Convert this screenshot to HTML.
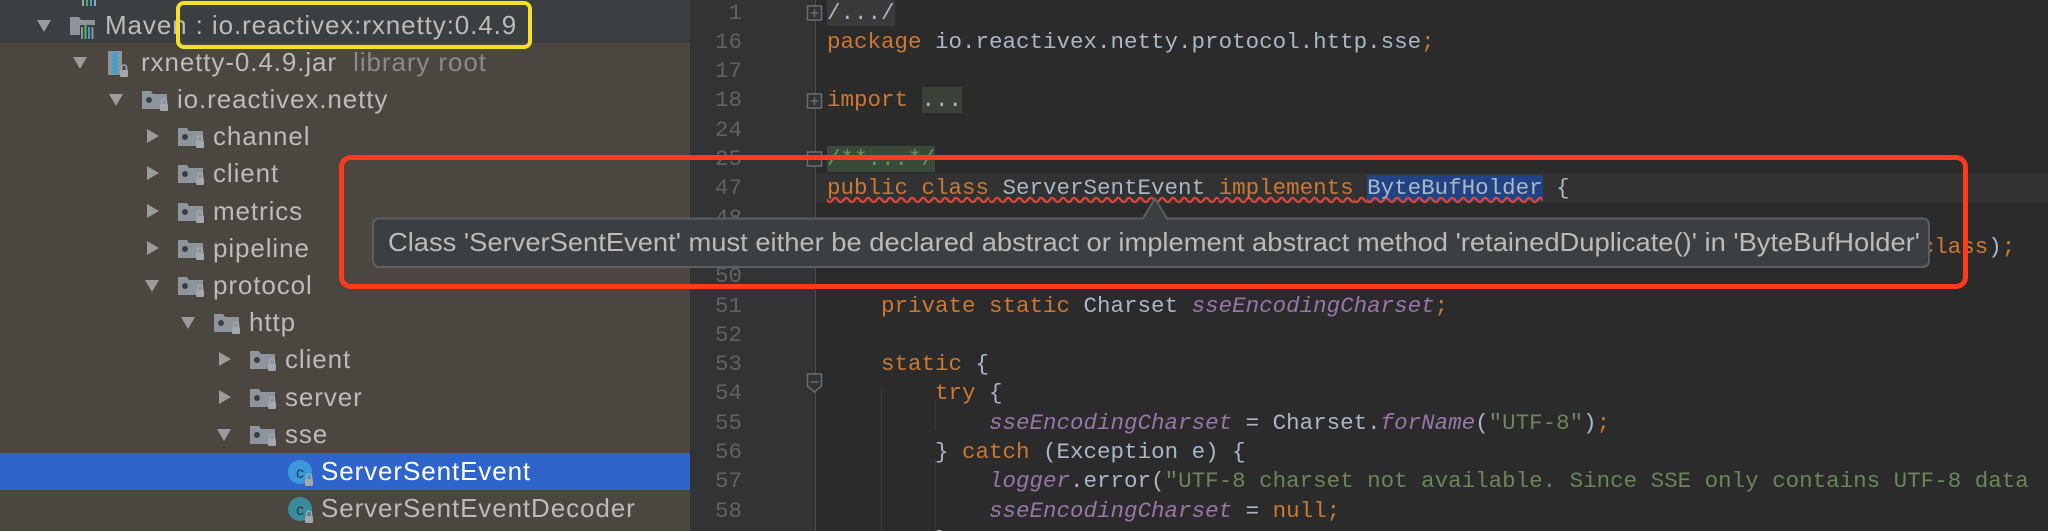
<!DOCTYPE html>
<html style="width:2048px;height:531px;overflow:hidden"><head><meta charset="utf-8"><style>
*{margin:0;padding:0;box-sizing:border-box}
body{width:2048px;height:531px;overflow:hidden;background:#2b2b2b;position:relative;font-family:"Liberation Sans",sans-serif}
.abs{position:absolute}
.side{left:0;top:0;width:690px;height:531px;background:#4b4740}
.row{position:absolute;left:0;width:690px;height:37px}
.t{position:absolute;top:0;line-height:37px;font-size:26px;color:#bbbbbb;white-space:pre;letter-spacing:0.9px}
.arr{position:absolute}
.code{position:absolute;left:827px;height:29px;line-height:29px;font-family:"Liberation Mono",monospace;font-size:22.5px;color:#a9b7c6;white-space:pre}
.ln{position:absolute;left:690px;width:52px;text-align:right;height:29px;line-height:29px;font-family:"Liberation Mono",monospace;font-size:22.5px;color:#606366}
.k{color:#cc7832}.p{color:#9876aa;font-style:italic}.s{color:#6a8759}
#wrap{position:absolute;left:0;top:0;width:2048px;height:531px;overflow:hidden}
</style></head><body><div id="wrap">
<div class="abs side"></div>
<div class="abs" style="left:0;top:0;width:690px;height:43px;background:#3c3f41"></div>
<svg class="abs" style="left:80px;top:0" width="20" height="8"><rect x="2" y="0" width="2" height="6" fill="#9aa"/><rect x="6" y="0" width="2" height="6" fill="#5a5"/><rect x="10" y="0" width="2" height="6" fill="#4a9fd0"/><rect x="14" y="0" width="2" height="6" fill="#9aa"/></svg>

<div class="abs" style="left:0;top:453px;width:690px;height:37px;background:#2f65ca"></div>

<div id="tree"></div>
<script>
var rows=[
[0,'maven','Maven : io.reactivex:rxnetty:0.4.9','d'],
[1,'jar','rxnetty-0.4.9.jar','d','  library root'],
[2,'pkg','io.reactivex.netty','d'],
[3,'pkg','channel','r'],
[3,'pkg','client','r'],
[3,'pkg','metrics','r'],
[3,'pkg','pipeline','r'],
[3,'pkg','protocol','d'],
[4,'pkg','http','d'],
[5,'pkg','client','r'],
[5,'pkg','server','r'],
[5,'pkg','sse','d'],
[6,'cls','ServerSentEvent','',null,1],
[6,'cls2','ServerSentEventDecoder','']
];
var lock='<rect x="19" y="17" width="8" height="7" rx="1" fill="#a3a8ad"/><path d="M20.5 17v-2.5a2.5 2.5 0 0 1 5 0V17" stroke="#a3a8ad" stroke-width="1.6" fill="none"/>';
var icons={
pkg:'<svg width="30" height="28"><path d="M1 4h9l2 3h14v15H1z" fill="#8d949b"/><circle cx="8" cy="13" r="3" fill="#3c3f41"/>'+lock+'</svg>',
maven:'<svg width="30" height="28"><path d="M1 4h9l2 3h14v15H1z" fill="#8d949b"/><rect x="11" y="12" width="15" height="14" fill="#3c3f41"/><rect x="12" y="14" width="2" height="12" fill="#8d949b"/><rect x="15.5" y="12" width="2" height="14" fill="#5db552"/><rect x="19" y="14" width="2" height="12" fill="#3b9ad9"/><rect x="22.5" y="14" width="2" height="12" fill="#8d949b"/></svg>',
jar:'<svg width="30" height="30"><rect x="3" y="1" width="14" height="24" fill="#8d949b"/><path d="M8 2l4 2-4 2 4 2-4 2 4 2-4 2 4 2-4 2 4 2-4 2 4 2" stroke="#2ea6d8" stroke-width="2" fill="none"/><g transform="translate(-4,3)">'+lock+'</g></svg>',
cls:'<svg width="32" height="30"><circle cx="13" cy="13" r="12" fill="#3d97dc"/><text x="13" y="19" text-anchor="middle" font-family="Liberation Sans" font-size="16" fill="#1d3d5a">c</text><g transform="translate(-1,3)">'+lock+'</g></svg>',
cls2:'<svg width="32" height="30"><circle cx="13" cy="13" r="12" fill="#3b8b9c"/><text x="13" y="19" text-anchor="middle" font-family="Liberation Sans" font-size="16" fill="#1d3d45">c</text><g transform="translate(-1,3)">'+lock+'</g></svg>'
};
var h='';
rows.forEach(function(r,i){
 var top=Math.round(25+37.2*i-18.5);var L=r[0];
 h+='<div class="row" style="top:'+top+'px">';
 var ax=36+36*L;
 if(r[3]=='d')h+='<svg class="arr" style="left:'+ax+'px;top:12px" width="16" height="14"><path d="M1 1h14L8 13z" fill="#9b9b9b"/></svg>';
 if(r[3]=='r')h+='<svg class="arr" style="left:'+(ax+2)+'px;top:10px" width="14" height="16"><path d="M1 1v14L13 8z" fill="#9b9b9b"/></svg>';
 var ix=69+36*L+(r[1]=='cls'||r[1]=='cls2'?2:0);
 h+='<div class="abs" style="left:'+ix+'px;top:6px">'+icons[r[1]]+'</div>';
 var col=r[5]?'#ffffff':'#bbbbbb';
 h+='<div class="t" style="left:'+(105+36*L)+'px;color:'+col+'">'+r[2]+(r[4]?'<span style="color:#8a8a8a">'+r[4]+'</span>':'')+'</div>';
 h+='</div>';
});
document.getElementById('tree').innerHTML=h;
</script>

<div class="abs" style="left:690px;top:0;width:125px;height:531px;background:#313335"></div>
<div class="abs" style="left:815px;top:0;width:1px;height:531px;background:#4a4c4e"></div>
<div class="abs" style="left:816px;top:173px;width:1232px;height:30px;background:#323232"></div>

<div id="ed"></div>
<script>
var L=[
['1','<span style="background:#3a3a3a;color:#a9b7c6">/.../</span>'],
['16','<span class="k">package</span> io.reactivex.netty.protocol.http.sse<span class="k">;</span>'],
['17',''],
['18','<span class="k">import</span> <span style="background:#3a4237;color:#a9b7c6">...</span>'],
['24',''],
['25','<span style="background:#3a4a3a;color:#629755">/**...*/</span>'],
['47','<span style="text-decoration:underline wavy #e0453a;text-decoration-skip-ink:none"><span class="k">public class</span> ServerSentEvent <span class="k">implements</span> <span style="background:#214283">ByteBufHolder</span></span> {'],
['48',''],
['49','    <span class="k">private static final</span> Logger <span class="p">logger</span> = LoggerFactory.<span class="p">getLogger</span>(ServerSentEvent.<span class="k">class</span>)<span class="k">;</span>'],
['50',''],
['51','    <span class="k">private static</span> Charset <span class="p">sseEncodingCharset</span><span class="k">;</span>'],
['52',''],
['53','    <span class="k">static</span> {'],
['54','        <span class="k">try</span> {'],
['55','            <span class="p">sseEncodingCharset</span> = Charset.<span class="p">forName</span>(<span class="s">"UTF-8"</span>)<span class="k">;</span>'],
['56','        } <span class="k">catch</span> (Exception e) {'],
['57','            <span class="p">logger</span>.error(<span class="s">"UTF-8 charset not available. Since SSE only contains UTF-8 data</span>'],
['58','            <span class="p">sseEncodingCharset</span> = <span class="k">null;</span>'],
['','        }']
];
var e='';
L.forEach(function(l,i){var t=Math.round(13+29.3*i-14.5);
 e+='<div class="ln" style="top:'+t+'px">'+l[0]+'</div><div class="code" style="top:'+t+'px">'+l[1]+'</div>';});
document.getElementById('ed').innerHTML=e;
</script>
<div class="abs" style="left:881px;top:386px;width:1px;height:145px;background:#3b3b3b"></div>
<div class="abs" style="left:935px;top:400px;width:1px;height:29px;background:#3b3b3b"></div>
<div class="abs" style="left:935px;top:458px;width:1px;height:73px;background:#3b3b3b"></div>
<svg class="abs" style="left:805px;top:0" width="22" height="531">
<g stroke="#6b6e70" stroke-width="1.5" fill="#313335">
<rect x="2.5" y="6" width="14" height="14"/><path d="M5.5 13h8M9.5 9v8"/>
<rect x="2.5" y="94" width="14" height="14"/><path d="M5.5 101h8M9.5 97v8"/>
<rect x="2.5" y="152" width="14" height="14"/><path d="M5.5 159h8"/>
<path d="M2.5 374h14v12l-7 6-7-6z"/><path d="M5.5 382h8"/>
</g></svg>

<div class="abs" style="left:339px;top:155px;width:1629px;height:134px;border:5px solid #fb3b1c;border-radius:12px"></div>
<svg class="abs" style="left:370px;top:192px" width="1570" height="80">
<path d="M9 26.5H773l12-20 12 20H1553a6 6 0 0 1 6 6V69a6 6 0 0 1-6 6H9a6 6 0 0 1-6-6V32.5a6 6 0 0 1 6-6z" fill="#3c3f41" stroke="#5c5f61" stroke-width="2"/>
<text x="18" y="59" font-family="Liberation Sans" font-size="26" fill="#bbbbbb" textLength="1532" lengthAdjust="spacingAndGlyphs">Class 'ServerSentEvent' must either be declared abstract or implement abstract method 'retainedDuplicate()' in 'ByteBufHolder'</text>
</svg>
<div class="abs" style="left:176px;top:1px;width:356px;height:48px;border:4px solid #f4e126;border-radius:8px"></div>
</div></body></html>
